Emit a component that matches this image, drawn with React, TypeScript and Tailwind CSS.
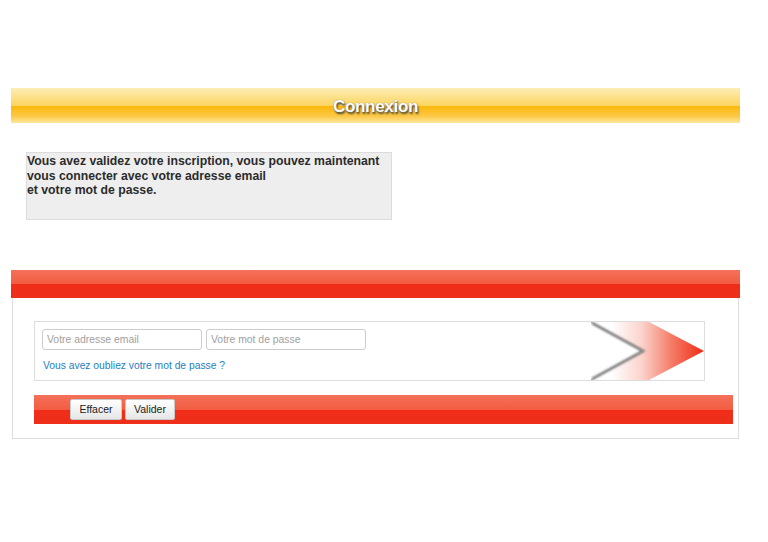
import React from "react";

function Chevron() {
  return (
    <svg width="113" height="58" viewBox="0 0 113 58">
      <defs>
        <linearGradient id="chev" x1="0" x2="1" y1="0" y2="0">
          <stop offset="0" stopColor="#ffffff" />
          <stop offset="0.18" stopColor="#ffffff" />
          <stop offset="0.45" stopColor="#fbd3cc" />
          <stop offset="0.7" stopColor="#f5806c" />
          <stop offset="1" stopColor="#ef2a14" />
        </linearGradient>
        <filter id="blur" x="-20%" y="-20%" width="140%" height="140%">
          <feGaussianBlur stdDeviation="1.2" />
        </filter>
      </defs>
      <polygon points="0,0 58,0 113,29 58,58 0,58 52,29" fill="url(#chev)" />
      <polyline points="1,1 52,29 1,57" fill="none" stroke="#6b6b6b" strokeWidth="2.5" filter="url(#blur)" />
      <polyline points="0,0 52,29 0,58" fill="none" stroke="#9a9a9a" strokeWidth="1" />
    </svg>
  );
}

function RedBar({ className, children }: { className?: string; children?: React.ReactNode }) {
  return (
    <div className={"bg-[linear-gradient(to_bottom,#f4715a_0%,#f25c42_50%,#f02d18_50%,#ee2f1a_100%)] " + (className ?? "")}>
      {children}
    </div>
  );
}

export default function App() {
  return (
    <div className="w-[768px] h-[542px] bg-white font-['Liberation_Sans',Arial,sans-serif] text-[#333]">
      <div className="pt-[88px] pl-[11px]">
        <div className="w-[729px] h-[35px] pt-[3px] flex items-center justify-center bg-[linear-gradient(to_bottom,#fdeeb6_0%,#fcd561_50%,#fbb80c_52%,#fcc844_80%,#fde6a0_100%)]">
          <span className="text-[17px] font-bold text-white tracking-[-0.3px] [text-shadow:1px_2px_2px_#444,0_0_1px_#666]">
            Connexion
          </span>
        </div>
      </div>

      <div className="mt-[29px] ml-[26px] w-[366px] h-[68px] bg-[#eeeeee] border border-[#dcdcdc] text-[12.25px] leading-[14.5px] font-bold text-[#2b2b2b] pt-px">
        Vous avez validez votre inscription, vous pouvez maintenant
        <br />
        vous connecter avec votre adresse email
        <br />
        et votre mot de passe.
      </div>

      <div className="mt-[50px] ml-[11px] w-[729px]">
        <RedBar className="h-[28px]" />
        <div className="mx-px border border-t-0 border-[#dddddd] h-[141px] pt-[23px] pl-[21px]">
          <div className="w-[671px] h-[60px] border border-[#dddddd] flex justify-between">
            <div className="pt-[7px] pl-[7px]">
              <div className="flex gap-[4px]">
                <input
                  placeholder="Votre adresse email"
                  className="w-[160px] h-[21px] border border-[#cccccc] rounded-[3px] px-[4px] text-[10.4px] placeholder:text-[#a0a0a0] outline-none"
                />
                <input
                  placeholder="Votre mot de passe"
                  className="w-[160px] h-[21px] border border-[#cccccc] rounded-[3px] px-[4px] text-[10.4px] placeholder:text-[#a0a0a0] outline-none"
                />
              </div>
              <a className="block mt-[8px] ml-px text-[10.3px] text-[#1f7ec2]">Vous avez oubliez votre mot de passe ?</a>
            </div>
            <Chevron />
          </div>
          <RedBar className="mt-[14px] w-[699px] h-[29px] flex items-center gap-[3px] pl-[36px]">
            <button className="h-[21px] w-[52px] text-[10.5px] text-[#222] border border-[#c8c8c8] rounded-[2px] bg-[linear-gradient(to_bottom,#ffffff,#e6e6e6)]">
              Effacer
            </button>
            <button className="h-[21px] w-[50px] text-[10.5px] text-[#222] border border-[#c8c8c8] rounded-[2px] bg-[linear-gradient(to_bottom,#ffffff,#e6e6e6)]">
              Valider
            </button>
          </RedBar>
        </div>
      </div>
    </div>
  );
}
